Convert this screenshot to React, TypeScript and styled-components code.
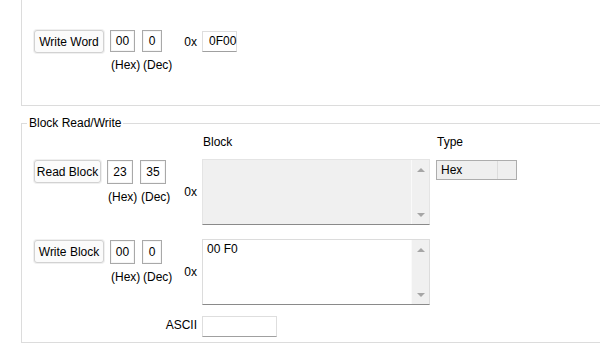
import * as React from 'react'
import styled, { createGlobalStyle } from 'styled-components'

const GlobalStyle = createGlobalStyle`
  html, body {
    margin: 0;
    padding: 0;
    background: #fff;
    overflow: hidden;
  }
  body {
    font-family: "Liberation Sans", Arial, sans-serif;
    font-size: 12px;
    color: #000;
  }
`

const Page = styled.div`
  padding-left: 21px;
`

const TopPanel = styled.div`
  height: 75px;
  padding: 30px 0 0 12px;
  border-left: 1px solid #dcdcdc;
  border-bottom: 1px solid #dcdcdc;
`

const FormGrid = styled.div`
  display: grid;
  grid-template-columns: 140px 28px 234px 81px;
  align-items: start;
`

const BlockGrid = styled(FormGrid)`
  grid-template-rows: 24px 80px 76px 21px;
  padding: 4px 0 6px 12px;
`

const Group = styled.fieldset`
  margin: 10px 0 0;
  padding: 0;
  min-width: 0;
  border: 1px solid #dcdcdc;
  border-right: none;
`

const Legend = styled.legend`
  margin-left: 5px;
  padding: 0 2px;
  line-height: 15px;
`

const Controls = styled.div<{ $top?: number }>`
  display: flex;
  align-items: flex-start;
  gap: 6px;
  margin-top: ${p => p.$top ?? 0}px;
`

const Button = styled.button<{ $w: number }>`
  width: ${p => p.$w}px;
  height: 23px;
  padding: 0;
  font: inherit;
  color: #000;
  background: #fbfbfb;
  border: 1px solid #d2d2d2;
  border-radius: 3px;
  box-shadow: 0 0 0 1px #f0f0f0;
`

const Field = styled.div<{ $w: number }>`
  display: flex;
  flex-direction: column;
  width: ${p => p.$w}px;
  & + & {
    margin-left: 1px;
  }
`

const NumBox = styled.div<{ $h: number }>`
  height: ${p => p.$h}px;
  box-sizing: border-box;
  border: 1px solid #a9a9a9;
  box-shadow: inset 0 0 0 1px #f6f6f6;
  background: #fff;
  text-align: center;
  line-height: ${p => p.$h - 2}px;
`

const Unit = styled.span`
  margin-top: 6px;
  padding-left: 1px;
  line-height: 15px;
  white-space: nowrap;
`

const Prefix = styled.div<{ $h: number }>`
  height: ${p => p.$h}px;
  display: flex;
  align-items: center;
  justify-content: flex-end;
  padding-right: 5px;
`

const ValueBox = styled.div<{ $w: number }>`
  width: ${p => p.$w}px;
  height: 21px;
  box-sizing: border-box;
  margin-top: 1px;
  padding-left: 6px;
  background: #fff;
  border: 1px solid #dedede;
  border-bottom-color: #a0a0a0;
  line-height: 19px;
`

const ColumnHead = styled.div`
  line-height: 15px;
  padding-left: 1px;
`

const TextArea = styled.div<{ $readOnly?: boolean }>`
  width: 228px;
  height: 66px;
  box-sizing: border-box;
  display: flex;
  background: ${p => (p.$readOnly ? '#f0f0f0' : '#fff')};
  border: 1px solid ${p => (p.$readOnly ? '#e4e4e4' : '#dcdcdc')};
  border-bottom-color: #8a8a8a;
`

const TextBody = styled.div`
  flex: 1;
  padding: 2px 4px;
  line-height: 15px;
`

const ScrollTrack = styled.div`
  width: 17px;
  display: flex;
  flex-direction: column;
  justify-content: space-between;
  align-items: center;
  padding: 8px 0 7px;
  background: #f0f0f0;
  border-left: 1px solid #fafafa;
`

const Select = styled.div`
  width: 81px;
  height: 20px;
  box-sizing: border-box;
  margin-top: 1px;
  display: flex;
  background: #efefef;
  border: 1px solid #adadad;
  line-height: 18px;
`

const SelectText = styled.span`
  flex: 1;
  padding-left: 4px;
`

const SelectDrop = styled.span`
  width: 18px;
  border-left: 1px solid #dcdcdc;
`

const AsciiLabel = styled.div`
  grid-column: 1 / 3;
  justify-self: end;
  padding-right: 5px;
  line-height: 21px;
`

const Arrow = ({ down }: { down?: boolean }) => (
  <svg width="8" height="4" viewBox="0 0 8 4">
    <polygon points={down ? '0,0 8,0 4,4' : '0,4 8,4 4,0'} fill="#a6a6a6" />
  </svg>
)

const Scroll = () => (
  <ScrollTrack>
    <Arrow />
    <Arrow down />
  </ScrollTrack>
)

type AddrProps = {
  label: string
  width: number
  hex: string
  dec: string
  hexW: number
  decW: number
  boxH: number
  top?: number
}

const AddrControls = ({ label, width, hex, dec, hexW, decW, boxH, top }: AddrProps) => (
  <Controls $top={top}>
    <Button $w={width}>{label}</Button>
    <Field $w={hexW}>
      <NumBox $h={boxH}>{hex}</NumBox>
      <Unit>(Hex)</Unit>
    </Field>
    <Field $w={decW}>
      <NumBox $h={boxH}>{dec}</NumBox>
      <Unit>(Dec)</Unit>
    </Field>
  </Controls>
)

export default function App() {
  return (
    <Page>
      <GlobalStyle />
      <TopPanel>
        <FormGrid>
          <AddrControls label="Write Word" width={70} hex="00" dec="0" hexW={25} decW={20} boxH={22} top={0} />
          <Prefix $h={23}>0x</Prefix>
          <ValueBox $w={35}>0F00</ValueBox>
        </FormGrid>
      </TopPanel>

      <Group>
        <Legend>Block Read/Write</Legend>
        <BlockGrid>
          <span />
          <span />
          <ColumnHead>Block</ColumnHead>
          <ColumnHead>Type</ColumnHead>

          <AddrControls label="Read Block" width={67} hex="23" dec="35" hexW={26} decW={26} boxH={24} top={1} />
          <Prefix $h={66}>0x</Prefix>
          <TextArea $readOnly>
            <TextBody />
            <Scroll />
          </TextArea>
          <Select>
            <SelectText>Hex</SelectText>
            <SelectDrop />
          </Select>

          <AddrControls label="Write Block" width={70} hex="00" dec="0" hexW={25} decW={20} boxH={24} top={1} />
          <Prefix $h={66}>0x</Prefix>
          <TextArea>
            <TextBody>00 F0</TextBody>
            <Scroll />
          </TextArea>
          <span />

          <AsciiLabel>ASCII</AsciiLabel>
          <ValueBox $w={75} />
        </BlockGrid>
      </Group>
    </Page>
  )
}
